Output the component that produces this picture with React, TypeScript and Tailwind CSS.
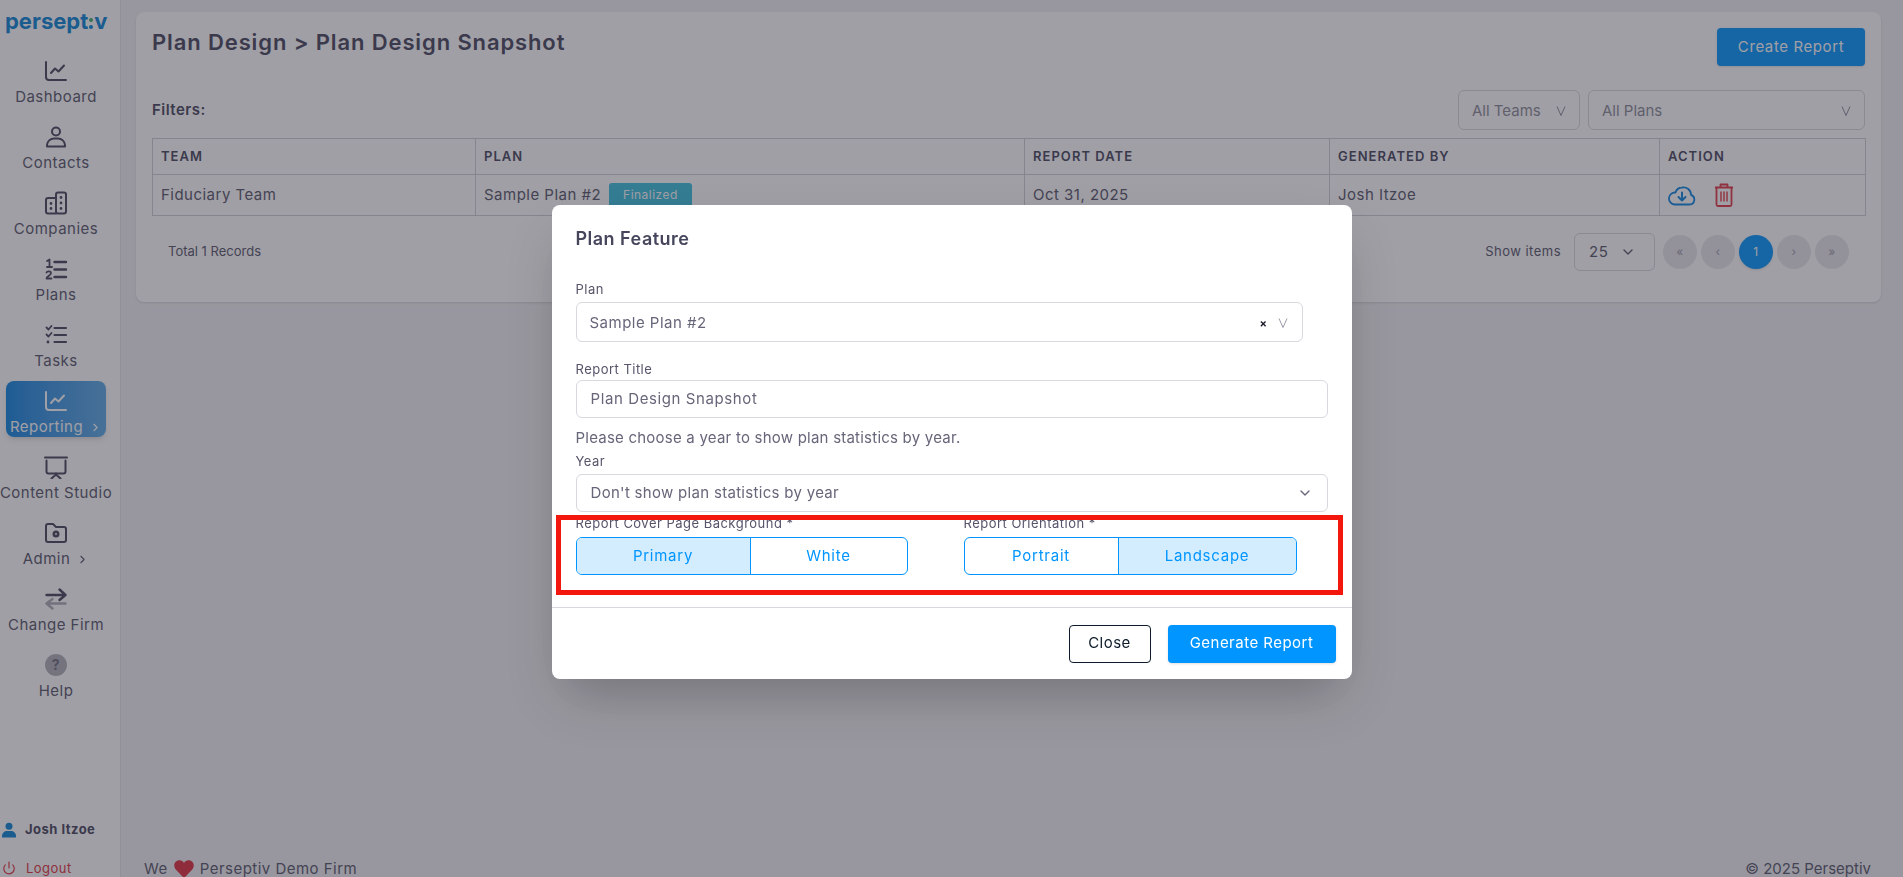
import React from 'react';
import { ChevronDown, ChevronRight, Power } from 'lucide-react';

const iconProps = {
  viewBox: '0 0 24 24',
  width: 24,
  height: 24,
  fill: 'none',
  stroke: 'currentColor',
  strokeWidth: 2,
  strokeLinecap: 'round' as const,
  strokeLinejoin: 'round' as const,
};

const ChartIcon = () => (
  <svg {...iconProps}>
    <path d="M2 3v15a3 3 0 0 0 3 3h17" />
    <path d="M7 14l4-4.500 3.500 3L20 6.500" />
  </svg>
);

const ContactIcon = () => (
  <svg {...iconProps}>
    <circle cx="12" cy="6.500" r="4" />
    <path d="M3 21.500v-1.500a7 7 0 0 1 7-6.500h4a7 7 0 0 1 7 6.500v1.500z" />
  </svg>
);

const CompaniesIcon = () => (
  <svg {...iconProps}>
    <rect x="12" y="1.500" width="10" height="21" rx="2" />
    <path d="M12 7H4a2 2 0 0 0-2 2v11.500a2 2 0 0 0 2 2h8" />
    <path d="M17 6.500v.01M17 12v.01M17 17.500v.01M7 12.500v.01M7 17.500v.01" strokeWidth="2.800" />
  </svg>
);

const PlansIcon = () => (
  <svg {...iconProps}>
    <path d="M10.500 5h11.500M10.500 12.500h11.500M10.500 20h11.500" strokeWidth="2.400" />
    <path d="M3 4l2.500-1.500V10M3 10h5" strokeWidth="1.800" />
    <path d="M2.500 15.500c.5-1.500 4.500-1.800 4.500.8 0 2-4.500 3-4.500 5.200h5" strokeWidth="1.800" />
  </svg>
);

const TasksIcon = () => (
  <svg {...iconProps}>
    <path d="M10.500 5h11.500M10.500 12h11.500M10.500 19h11.500" strokeWidth="2.200" />
    <path d="M2.500 4.500l2 2 3-3.500M2.500 11.500l2 2 3-3.500" strokeWidth="1.800" />
    <path d="M4 19v.01" strokeWidth="2.800" />
  </svg>
);

const PresentationIcon = () => (
  <svg {...iconProps}>
    <path d="M1 2.500h22" />
    <path d="M2.500 5.500v11a2 2 0 0 0 2 2h15a2 2 0 0 0 2-2v-11" />
    <path d="M12 18.500v1M7.500 23.500l4.500-4 4.500 4" />
  </svg>
);

const AdminIcon = () => (
  <svg {...iconProps}>
    <path d="M2 5a2 2 0 0 1 2-2h5l3 3h8a2 2 0 0 1 2 2v11a2 2 0 0 1-2 2H4a2 2 0 0 1-2-2z" />
    <circle cx="12" cy="13" r="2.200" strokeWidth="2.600" />
  </svg>
);

const SwapIcon = () => (
  <svg {...iconProps} strokeWidth="2.400">
    <path d="M2.500 8h19M15.500 2.500 21.500 8l-6 5" />
    <path d="M21.500 16.500h-19M8.500 12l-6 4.500 6 5" opacity="0.45" />
  </svg>
);

const HelpIcon = () => (
  <div className="flex h-[22px] w-[22px] items-center justify-center rounded-full bg-[#b0b0b8] text-[14px] font-bold leading-none text-[#69697a]">?</div>
);

const CloudIcon = () => (
  <svg viewBox="0 0 28 22" width="28" height="22" fill="none" stroke="currentColor" strokeWidth="1.800" strokeLinecap="round" strokeLinejoin="round" className="text-[#0a84e0]">
    <path d="M6.500 20.500h15a5 5 0 0 0 1.500-9.700A7.500 7.500 0 0 0 14 3.500a7 7 0 0 0-6.500 5A6 6 0 0 0 6.500 20.500z" />
    <path d="M14 8.500v8M10.500 13l3.500 3.500 3.500-3.500" strokeWidth="2" />
  </svg>
);

const TrashIcon = () => (
  <svg viewBox="0 0 20 24" width="20" height="24" fill="none" stroke="currentColor" strokeWidth="1.800" strokeLinejoin="round" className="text-[#e23744]">
    <path d="M1 4.500h18M6.500 4.500V1.500h7v3" />
    <path d="M2.500 4.500v17a1.500 1.500 0 0 0 1.500 1.500h12a1.500 1.500 0 0 0 1.500-1.500v-17" />
    <path d="M7 8.500v10M10 8.500v10M13 8.500v10" strokeWidth="1.400" />
  </svg>
);

const UserSolid = () => (
  <svg viewBox="0 0 14 16" width="14" height="16" fill="currentColor" className="text-[#0a84d6]">
    <circle cx="7" cy="4.200" r="3.500" />
    <path d="M0 15.500v-1.500c0-3 2.500-5 5-5h4c2.500 0 5 2 5 5v1.500z" />
  </svg>
);

const Caret = ({ className = '' }: { className?: string }) => (
  <svg viewBox="0 0 10 12" width="10" height="12" fill="none" stroke="currentColor" strokeWidth="1" className={className}>
    <path d="M1 1.500 5 10.500 9 1.500" />
  </svg>
);

const NavItem = ({ icon, label, chevron, active }: { icon: React.ReactNode; label: string; chevron?: boolean; active?: boolean }) => (
  <div className="flex h-[66px] w-[112px] flex-col items-center pt-[7px]">
    <div className={`flex h-[56px] w-[100px] flex-col items-center rounded-lg pt-[7px] ${active ? 'bg-gradient-to-r from-[#0a84e0] to-[#5aa9e6] text-white shadow-md' : 'text-[#45455c]'}`}>
      <div className="flex h-[26px] items-center">{icon}</div>
      <div className={`mt-[3px] flex items-center whitespace-nowrap text-[15px] leading-[20px] ${active ? 'text-white' : 'text-[#55556a]'}`}>
        {label}
        {chevron && <ChevronRight size={13} className="ml-[6px]" />}
      </div>
    </div>
  </div>
);

const Sidebar = () => (
  <aside className="flex h-full w-[120px] shrink-0 flex-col bg-white">
    <div className="flex h-[41px] items-center pl-[5px] text-[22px] font-bold leading-none tracking-normal text-[#0a84d6]">
      persept
      <span className="mx-[1px] flex flex-col gap-[3px] pt-[5px]">
        <span className="h-[4px] w-[4px] rounded-full bg-[#3fae6a]" />
        <span className="h-[4px] w-[4px] rounded-full bg-[#0a84d6]" />
      </span>
      v
    </div>
    <div className="mt-[3px]">
      <NavItem icon={<ChartIcon />} label="Dashboard" />
      <NavItem icon={<ContactIcon />} label="Contacts" />
      <NavItem icon={<CompaniesIcon />} label="Companies" />
      <NavItem icon={<PlansIcon />} label="Plans" />
      <NavItem icon={<TasksIcon />} label="Tasks" />
      <NavItem icon={<ChartIcon />} label="Reporting" chevron active />
      <NavItem icon={<PresentationIcon />} label="Content Studio" />
      <NavItem icon={<AdminIcon />} label="Admin" chevron />
      <NavItem icon={<SwapIcon />} label="Change Firm" />
      <NavItem icon={<HelpIcon />} label="Help" />
    </div>
    <div className="mt-auto">
      <div className="flex items-center gap-[9px] pl-[2px] text-[13px] font-bold text-[#45455c]">
        <UserSolid />
        Josh Itzoe
      </div>
      <div className="mt-[18px] flex translate-y-[1px] items-center gap-[10px] pl-[2px] text-[13px] text-[#e0303c]">
        <Power size={14} />
        Logout
      </div>
    </div>
  </aside>
);

const SelectBox = ({ label, className = '' }: { label: string; className?: string }) => (
  <div className={`flex h-[40px] items-center justify-between rounded-md border border-[#d8d8de] px-[13px] pt-[2px] text-[15px] tracking-normal text-[#8a8a98] ${className}`}>
    {label}
    <Caret />
  </div>
);

const PageButton = ({ label, active }: { label: string; active?: boolean }) => (
  <div className={`flex h-[34px] w-[34px] items-center justify-center rounded-full text-[12px] ${active ? 'bg-[#0095ff] text-white shadow' : 'bg-[#e8e8ec] text-[#9a9aa8]'}`}>{label}</div>
);

const th = 'border border-[#cfcfd6] px-2 text-left text-[13px] font-semibold tracking-[0.08em] text-[#45455c]';
const td = 'border border-[#cfcfd6] px-2 text-[15px] text-[#55556a]';

const Card = () => (
  <section className="h-[290px] rounded-lg bg-white px-4 pt-4 shadow-sm">
    <div className="flex items-start justify-between">
      <h1 className="text-[22px] font-semibold leading-[28px] tracking-[0.04em] text-[#45455c]">Plan Design &gt; Plan Design Snapshot</h1>
      <button className="h-[38px] w-[148px] rounded bg-[#0095ff] text-[15px] tracking-[0.04em] text-white shadow">Create Report</button>
    </div>
    <div className="mt-[24px] flex h-[40px] items-center justify-between">
      <span className="text-[15px] font-semibold text-[#45455c]">Filters:</span>
      <div className="flex gap-2">
        <SelectBox label="All Teams" className="w-[122px]" />
        <SelectBox label="All Plans" className="w-[277px]" />
      </div>
    </div>
    <table className="mt-2 w-full table-fixed border-collapse">
      <thead>
        <tr className="h-[36px]">
          <th className={`${th} w-[323px]`}>TEAM</th>
          <th className={`${th} w-[549px]`}>PLAN</th>
          <th className={`${th} w-[305px]`}>REPORT DATE</th>
          <th className={`${th} w-[330px]`}>GENERATED BY</th>
          <th className={`${th} w-[206px]`}>ACTION</th>
        </tr>
      </thead>
      <tbody>
        <tr className="h-[41px]">
          <td className={td}>Fiduciary Team</td>
          <td className={td}>
            <span className="flex items-center gap-2">
              Sample Plan #2
              <span className="rounded-[3px] bg-[#39c0de] px-[14px] py-[3px] text-[12px] text-white">Finalized</span>
            </span>
          </td>
          <td className={td}>Oct 31, 2025</td>
          <td className={td}>Josh Itzoe</td>
          <td className={td}>
            <div className="flex items-center gap-[18px]">
              <CloudIcon />
              <TrashIcon />
            </div>
          </td>
        </tr>
      </tbody>
    </table>
    <div className="mt-[17px] flex h-[38px] items-center justify-between px-4">
      <span className="text-[13px] tracking-normal text-[#55556a]">Total 1 Records</span>
      <div className="flex items-center">
        <span className="text-[13px] text-[#55556a]">Show items</span>
        <div className="ml-[13px] flex h-[38px] w-[81px] items-center justify-between rounded-md border border-[#d8d8de] pl-[14px] pr-[18px] text-[15px] text-[#55556a]">
          25
          <ChevronDown size={16} />
        </div>
        <div className="ml-2 flex gap-1">
          <PageButton label="«" />
          <PageButton label="‹" />
          <PageButton label="1" active />
          <PageButton label="›" />
          <PageButton label="»" />
        </div>
      </div>
    </div>
  </section>
);

const Toggle = ({ label, active, className = '' }: { label: string; active?: boolean; className?: string }) => (
  <div className={`flex h-full items-center justify-center text-[15px] tracking-[0.05em] text-[#0095ff] ${active ? 'bg-[#d3edff]' : ''} ${className}`}>{label}</div>
);

const Modal = () => (
  <div className="relative w-[800px] rounded-lg bg-white shadow-2xl">
    <div className="px-6 pt-[22px]">
      <h2 className="text-[18px] font-semibold leading-[24px] text-[#45455c]">Plan Feature</h2>
      <label className="mt-[29px] block text-[13px] leading-[18px] text-[#55556a]">Plan</label>
      <div className="mt-[4px] flex h-[40px] w-[727px] items-center justify-between rounded-md border border-[#d8d8de] pl-[13px] pr-[14px] pt-[2px] text-[15px] text-[#66667a]">
        Sample Plan #2
        <span className="flex items-center gap-[10px]">
          <span className="text-[11px] font-bold leading-none text-[#1a1a2a]">×</span>
          <Caret className="text-[#9a9aa8]" />
        </span>
      </div>
      <label className="mt-[18px] block text-[13px] leading-[18px] text-[#55556a]">Report Title</label>
      <div className="mt-[2px] flex h-[38px] items-center rounded-md border border-[#d8d8de] px-[14px] text-[15px] tracking-[0.04em] text-[#66667a]">Plan Design Snapshot</div>
      <p className="mt-[9px] text-[15px] leading-[22px] tracking-[0.015em] text-[#66667a]">Please choose a year to show plan statistics by year.</p>
      <label className="mt-[3px] block text-[13px] leading-[18px] text-[#55556a]">Year</label>
      <div className="mt-[4px] flex h-[38px] items-center justify-between rounded-md border border-[#d8d8de] px-[14px] text-[15px] tracking-[0.02em] text-[#66667a]">
        Don't show plan statistics by year
        <ChevronDown size={16} />
      </div>
      <div className="mt-[2px] flex">
        <div className="w-[388px]">
          <label className="block text-[13px] leading-[19px] text-[#55556a]">Report Cover Page Background *</label>
          <div className="mt-[4px] flex h-[38px] w-[332px] overflow-hidden rounded-md border border-[#0095ff]">
            <Toggle label="Primary" active className="w-[174px] border-r border-[#0095ff]" />
            <Toggle label="White" className="flex-1" />
          </div>
        </div>
        <div>
          <label className="block text-[13px] leading-[19px] text-[#55556a]">Report Orientation *</label>
          <div className="mt-[4px] flex h-[38px] w-[333px] overflow-hidden rounded-md border border-[#0095ff]">
            <Toggle label="Portrait" className="w-[154px] border-r border-[#0095ff]" />
            <Toggle label="Landscape" active className="flex-1" />
          </div>
        </div>
      </div>
    </div>
    <div className="mt-[32px] flex h-[72px] items-center justify-end gap-[17px] border-t border-[#d8d8de] pr-[16px]">
      <button className="h-[38px] w-[82px] rounded border border-[#0d1b2a] text-[15px] text-[#0d1b2a]">Close</button>
      <button className="h-[38px] w-[168px] rounded bg-[#0095ff] text-[15px] text-white shadow">Generate Report</button>
    </div>
    <div className="absolute left-[4px] top-[310px] h-[80px] w-[787px] border-[5px] border-[#f4170e]" />
  </div>
);

export default function App() {
  return (
    <div className="relative flex h-screen overflow-hidden bg-[#f1f1f4] font-['Inter',sans-serif] tracking-[0.03em]">
      <Sidebar />
      <main className="flex min-w-0 flex-1 flex-col border-l border-[#e4e4e8] pl-[15px] pr-[22px] pt-[12px]">
        <Card />
        <footer className="mt-auto flex translate-y-[3px] items-center justify-between pl-[8px] pr-[10px] text-[15px] leading-[20px] text-[#55556a]">
          <span className="flex items-center gap-[5px]">
            We
            <svg viewBox="0 0 24 24" width="22" height="22" className="text-[#e02b3c]" fill="currentColor">
              <path d="M12 22 3 12.500C-.5 8 2 2.500 7 2.500c2.300 0 4 1.200 5 3 1-1.800 2.700-3 5-3 5 0 7.500 5.500 4 10z" />
            </svg>
            Perseptiv Demo Firm
          </span>
          <span className="tracking-normal">© 2025 Perseptiv</span>
        </footer>
      </main>
      <div className="fixed inset-0 flex items-start justify-center bg-[#302d3b]/46 pt-[205px]">
        <Modal />
      </div>
    </div>
  );
}
